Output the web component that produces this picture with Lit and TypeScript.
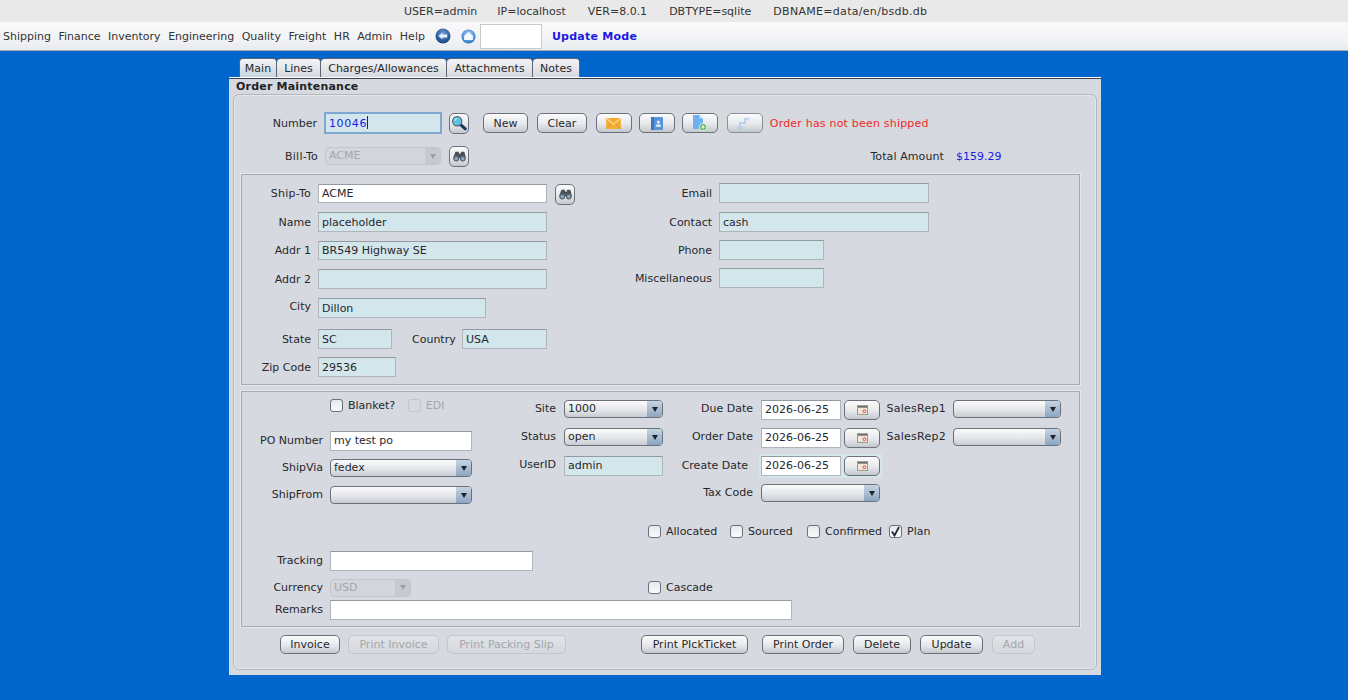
import { LitElement, html, css, svg } from "lit";
import { customElement } from "lit/decorators.js";

const icons: Record<string, unknown> = {
  back: svg`<svg width="16" height="16" viewBox="0 0 17 17"><defs><radialGradient id="bk" cx="50%" cy="35%" r="65%"><stop offset="0" stop-color="#6f9fd8"/><stop offset="1" stop-color="#123f80"/></radialGradient></defs><circle cx="8.5" cy="8.5" r="8" fill="url(#bk)"/><path d="M3.5 8.5 8 5v2h5v3H8v2z" fill="#e8f2ff"/></svg>`,
  fwd: svg`<svg width="15" height="15" viewBox="0 0 17 17"><defs><radialGradient id="fw" cx="50%" cy="40%" r="60%"><stop offset="0" stop-color="#cfe4fb"/><stop offset="1" stop-color="#1f6fc4"/></radialGradient></defs><circle cx="8.5" cy="8.5" r="8" fill="url(#fw)"/><path d="M8.500 3.500 13.500 8v4.500h-10V8z" fill="#f2f8ff"/></svg>`,
  search: svg`<svg width="16" height="16" viewBox="0 0 18 18"><path d="m10.500 10.500 5.500 5" stroke="#17385e" stroke-width="3.400" stroke-linecap="round"/><circle cx="7" cy="7" r="5.200" fill="#5fc4e4" stroke="#55606b" stroke-width="1.300"/><path d="M4 6.500a3.400 3.400 0 0 1 3-2.600" stroke="#c9eef8" stroke-width="1.200" fill="none"/></svg>`,
  binoc: svg`<svg width="15" height="13" viewBox="0 0 18 16"><path d="M4 2h4l1 3h1l1-3h4l2 8H1z" fill="#4a5058"/><circle cx="5" cy="10.500" r="3.600" fill="#5d6670"/><circle cx="13" cy="10.500" r="3.600" fill="#5d6670"/><circle cx="5" cy="10.500" r="2" fill="#86aec6"/><circle cx="13" cy="10.500" r="2" fill="#86aec6"/></svg>`,
  mail: svg`<svg width="15" height="11" viewBox="0 0 16 12"><rect width="16" height="12" rx="1" fill="#f2ab33"/><path d="m.5.5 7.500 6.500L15.500.5" stroke="#ffe2a0" stroke-width="1.200" fill="none"/><path d="m.5 11.500 5.500-6M15.500 11.500 10 5.500" stroke="#d98f1e" stroke-width=".8"/></svg>`,
  book: svg`<svg width="12" height="13" viewBox="0 0 13 14"><rect width="13" height="14" rx="1" fill="#5a93dc"/><rect width="3" height="14" fill="#3f74bd"/><circle cx="8" cy="5.500" r="1.700" fill="#e6f0fb"/><path d="M5 10.500c0-2 1.200-2.800 3-2.800s3 .8 3 2.800z" fill="#e6f0fb"/></svg>`,
  doc: svg`<svg width="15" height="16" viewBox="0 0 15 16"><path d="M1 0h6.500L11 3.500V14H1z" fill="#70b0ee"/><path d="M7.500 0v3.500H11z" fill="#cfe5fa"/><circle cx="11" cy="12" r="3.500" fill="#4aa64f" stroke="#e8f5e8"/><path d="M9 12h4M11 10v4" stroke="#fff" stroke-width="1.100"/></svg>`,
  arrows: svg`<svg width="17" height="15" viewBox="0 0 17 15" fill="none" stroke="#b9d2ea" stroke-width="2"><path d="M4 14V7h5V3h3"/><path d="m11 .5 4 2.500-4 2.500" fill="#cfe0f1" stroke="none"/><path d="M1.500 11 4 14l2.500-3"/></svg>`,
  cal: svg`<svg width="11" height="10" viewBox="0 0 14 12"><rect x=".5" y=".5" width="13" height="11" fill="#efe8da" stroke="#8a837c"/><rect x="1" y="1" width="12" height="2" fill="#6a6460"/><circle cx="9.500" cy="7.500" r="2.400" fill="#ec6a6a"/><circle cx="9.500" cy="7.500" r="1" fill="#fff"/></svg>`,
};

@customElement("app-root")
export class AppRoot extends LitElement {
  static styles = css`
    :host {
      display: block;
      height: 700px;
      overflow: hidden;
      background: #0066cc;
      font-family: "DejaVu Sans", sans-serif;
      font-size: 11px;
      color: #26282c;
    }
    .status {
      height: 22px;
      background: #e9e9e9;
      display: flex;
      align-items: center;
      padding-left: 404px;
      box-sizing: border-box;
      gap: 22px;
      color: #333;
    }
    .status .user {
      margin-right: -2px;
    }
    .status .db {
      letter-spacing: 0.3px;
    }
    .menubar {
      height: 29px;
      box-sizing: border-box;
      background: linear-gradient(#fafafb, #f2f3f5 60%, #e9ebee);
      border-bottom: 1px solid #a9acb2;
      display: flex;
      align-items: center;
      padding-left: 3px;
      color: #333;
    }
    .menus {
      display: flex;
      gap: 7.5px;
    }
    .nav {
      display: flex;
      align-items: center;
      margin-left: 10px;
      gap: 10px;
    }
    .nav svg {
      display: block;
    }
    .jump {
      width: 62px;
      height: 25px;
      box-sizing: border-box;
      background: #fff;
      border: 1px solid #c6c9cf;
      margin-left: 4px;
    }
    .mode {
      margin-left: 10px;
      font-weight: bold;
      letter-spacing: 0.25px;
      color: #1a1ae6;
    }
    .frame {
      width: 872px;
      margin: 7px 0 0 229px;
    }
    .tabs {
      display: grid;
      grid-template-columns: 38px 44px 126px 86px 47px;
      margin-left: 10px;
      height: 19px;
    }
    .tab {
      height: 19px;
      box-sizing: border-box;
      padding-top: 3px;
      text-align: center;
      border: 1px solid #5c6470;
      border-bottom: none;
      border-left-width: 0;
      border-radius: 4px 4px 0 0;
      background: linear-gradient(#f3f4f6, #d6d9df);
      white-space: nowrap;
    }
    .tab:first-child {
      border-left-width: 1px;
      background: linear-gradient(#f3f5f7, #c6d4e0);
    }
    .page {
      height: 598px;
      box-sizing: border-box;
      background: #d6d9df;
      border-top: 1px solid #fff;
      box-shadow: inset 0 1px #39414e;
      padding: 2px 4px 0;
    }
    .title {
      font-weight: bold;
      letter-spacing: 0.2px;
      padding-left: 3px;
      height: 13px;
      line-height: 13px;
      color: #222;
    }
    .card {
      margin-top: 1px;
      height: 576px;
      box-sizing: border-box;
      border: 1px solid #b3b7be;
      box-shadow: inset 0 0 0 1px #e4e6ea;
      border-radius: 6px;
      padding: 16px 17px 0 7px;
    }
    .row1 {
      display: grid;
      grid-template-columns: 83px 118px 7px 20px 14px auto 9px auto 9px auto 7px auto 7px auto 9px auto 7px 1fr;
      height: 24px;
      align-items: center;
    }
    .row2 {
      display: grid;
      grid-template-columns: 84px 116px 8px 20px 399px 76px 12px 1fr;
      height: 24px;
      margin-top: 9px;
      align-items: center;
    }
    .lbl {
      text-align: right;
      white-space: nowrap;
      padding-right: 7px;
    }
    .row2 .amount {
      padding: 0;
      letter-spacing: 0.1px;
    }
    .wide {
      letter-spacing: 0.25px;
    }
    .tf {
      height: 20px;
      box-sizing: border-box;
      border: 1px solid #b0b4bb;
      border-top-color: #949aa2;
      background: #fff;
      padding: 0 3px;
      line-height: 20px;
      white-space: nowrap;
      overflow: hidden;
      min-width: 0;
    }
    .ro {
      background: #d3e6ec;
    }
    .focus {
      height: 22px;
      line-height: 20px;
      background: #d3e6ec;
      border: 2px solid #7fa7cf;
      color: #1a1ae6;
      letter-spacing: 0.6px;
    }
    .caret {
      display: inline-block;
      width: 1px;
      height: 13px;
      background: #26282c;
      vertical-align: -2px;
    }
    .btn {
      height: 20px;
      box-sizing: border-box;
      border: 1px solid #6c7179;
      border-radius: 5px;
      background: linear-gradient(#fbfbfc, #e6e8eb 55%, #c4c8ce);
      display: flex;
      align-items: center;
      justify-content: center;
      padding: 0 9.5px;
      white-space: nowrap;
      color: #26282c;
    }
    .btn.icon {
      padding: 0;
      width: 36px;
    }
    .btn.sq {
      padding: 0;
      width: 20px;
      height: 21px;
    }
    .btn.off {
      border-color: #c3c6cc;
      background: linear-gradient(#e2e4e8, #d4d7dc);
      color: #a3a7ad;
    }
    .btn.icon.dim {
      border-color: #8b9098;
    }
    .btn.cal {
      width: 36px;
      padding: 0;
      margin-left: 3px;
    }
    .warn {
      color: #ee2a2a;
      letter-spacing: 0.2px;
    }
    .total {
      color: #1a1ae6;
    }
    .combo {
      height: 18px;
      box-sizing: border-box;
      border: 1px solid #6c7179;
      border-radius: 4px;
      background: linear-gradient(#fbfbfc, #e4e6ea 55%, #c8ccd2);
      display: flex;
      justify-content: space-between;
      align-items: stretch;
      padding-left: 3px;
      line-height: 16px;
      overflow: hidden;
    }
    .combo i {
      width: 15px;
      background: linear-gradient(#c6d4e2, #8ba6c2);
      display: flex;
      align-items: center;
      justify-content: center;
    }
    .combo i::after {
      content: "";
      border-top: 5px solid #1f2328;
      border-left: 3.5px solid transparent;
      border-right: 3.5px solid transparent;
    }
    .combo.off {
      border-color: #c3c6cc;
      background: #d3d6db;
      color: #a3a7ad;
    }
    .combo.off i {
      background: #c6cad0;
    }
    .combo.off i::after {
      border-top-color: #9a9ea5;
    }
    .box {
      box-sizing: border-box;
      border: 1px solid #a6a9af;
      box-shadow: 0 0 0 1px #e6e8eb;
      width: 839px;
    }
    .ship {
      height: 211px;
      margin-top: 6px;
      display: grid;
      grid-template-columns: 69px 7px 229px 8px 20px 137px 7px 210px;
      grid-template-rows: 28px 29px 28px 29px 31px 28px 28px;
      padding-top: 9px;
      justify-content: start;
      align-items: start;
    }
    .ship .lbl {
      padding: 0;
      line-height: 22px;
    }
    .ship .tf {
      grid-column: 3;
    }
    .ship .lbl.short {
      line-height: 20px;
    }
    .ship .tf.short {
      height: 19px;
      line-height: 18px;
    }
    .ship .lbl.city {
      line-height: 17px;
    }
    .rl {
      grid-column: 1;
    }
    .gap {
      grid-column: 3;
      display: flex;
      align-items: center;
    }
    .gap .country {
      margin: 0 auto 0 20px;
    }
    .w74 { width: 74px; }
    .w85 { width: 85px; }
    .w78 { width: 78px; }
    .w168 { width: 168px; }
    .ship .sq {
      grid-column: 5;
    }
    .ship .rlabel {
      grid-column: 6;
    }
    .ship .tf.rf {
      grid-column: 8;
    }
    .ship .lift {
      margin-top: -1px;
    }
    .ship .w105 {
      width: 105px;
    }
    .order {
      margin-top: 6px;
      height: 236px;
      padding-top: 8px;
    }
    .form {
      display: grid;
      grid-template-columns: 81px 7px 142px 84px 8px 99px 90px 8px 119px 66px 7px 108px;
      grid-template-rows: 28px 28px 28px 27px;
      align-items: start;
    }
    .form .tf {
      line-height: 18px;
    }
    .form .lbl,
    .tail .lbl {
      padding: 0;
      line-height: 18px;
    }
    .form .lbl.create {
      padding-right: 5px;
      line-height: 20px;
    }
    .form .lbl.po {
      line-height: 20px;
    }
    .c1 { grid-column: 1; }
    .c3 { grid-column: 3; }
    .c4 { grid-column: 4; }
    .c6 { grid-column: 6; }
    .c7 { grid-column: 7; }
    .c9 { grid-column: 9; }
    .c10 { grid-column: 10; }
    .c12 { grid-column: 12; }
    .r1 { grid-row: 1; }
    .r2 { grid-row: 2; }
    .r3 { grid-row: 3; }
    .r4 { grid-row: 4; }
    .po { margin-top: 3px; }
    .via { margin-top: 3px; }
    .from { margin-top: 2px; }
    .dates {
      display: flex;
    }
    .dates .tf {
      width: 80px;
    }
    .dates.hl {
      box-shadow: 0 0 0 2px #d4e6ec;
      background: #d4e6ec;
    }
    .cb {
      display: flex;
      align-items: center;
      gap: 5px;
      white-space: nowrap;
    }
    .cb b {
      width: 13px;
      height: 13px;
      box-sizing: border-box;
      border: 1px solid #6c7179;
      border-radius: 3px;
      background: linear-gradient(#e6e8ec, #fbfbfc);
      display: flex;
      align-items: center;
      justify-content: center;
    }
    .cb.off {
      color: #a3a7ad;
    }
    .cb.off b {
      border-color: #c3c6cc;
      background: #d6d9df;
    }
    .blanket {
      grid-column: 3 / 6;
      grid-row: 1;
      display: flex;
      gap: 12.5px;
      margin-top: -1px;
    }
    .flags {
      display: grid;
      grid-template-columns: 406px 82px 77px 82px auto;
      margin-top: 11px;
      height: 18px;
      align-items: center;
    }
    .tail {
      display: grid;
      grid-template-columns: 81px 7px 318px 1fr;
      margin-top: 11px;
      align-items: center;
    }
    .tail .tf {
      width: 203px;
    }
    .tail .combo {
      width: 81px;
    }
    .cur {
      margin-top: 7px;
      height: 19px;
    }
    .rem {
      margin-top: 3px;
    }
    .tail .rem-f {
      width: 462px;
      grid-column: 3 / 5;
    }
    .actions {
      margin-top: 7px;
      padding-left: 39px;
      display: flex;
      align-items: center;
      height: 21px;
    }
    .actions .btn {
      height: 19px;
      padding: 0;
      flex: none;
      margin-left: 9px;
    }
    .actions .btn:first-child {
      margin-left: 0;
      width: 60px;
    }
    .actions .a2 { width: 91px; margin-left: 8px; }
    .actions .a3 { width: 119px; margin-left: 8px; }
    .actions .a4 { width: 107px; margin-left: 75px; }
    .actions .a5 { width: 82px; margin-left: 14px; }
    .actions .a6 { width: 58px; }
    .actions .a7 { width: 63px; }
    .actions .a8 { width: 43px; }
  `;

  private lbl(text: string, cls = "") {
    return html`<div class="lbl ${cls}">${text}</div>`;
  }

  private combo(value: string, cls = "") {
    return html`<div class="combo ${cls}"><span>${value}</span><i></i></div>`;
  }

  private cb(text: string, on = false, off = false) {
    return html`<div class="cb ${off ? "off" : ""}">
      <b>${on
        ? svg`<svg width="11" height="11" viewBox="0 0 11 11"><path d="M2 5.500 4.500 9.500 9 1" fill="none" stroke="#1e2a3a" stroke-width="1.800"/></svg>`
        : ""}</b>${text}
    </div>`;
  }

  private dates() {
    return html`<div class="tf">2026-06-25</div><div class="btn cal">${icons.cal}</div>`;
  }

  render() {
    const menus = ["Shipping", "Finance", "Inventory", "Engineering", "Quality", "Freight", "HR", "Admin", "Help"];
    const tabs = ["Main", "Lines", "Charges/Allowances", "Attachments", "Notes"];
    return html`
      <div class="status">
        <span class="user">USER=admin</span><span>IP=localhost</span><span>VER=8.0.1</span><span>DBTYPE=sqlite</span><span class="db">DBNAME=data/en/bsdb.db</span>
      </div>
      <div class="menubar">
        <div class="menus">${menus.map((m) => html`<span>${m}</span>`)}</div>
        <div class="nav">${icons.back}${icons.fwd}</div>
        <div class="jump"></div>
        <div class="mode">Update Mode</div>
      </div>
      <div class="frame">
        <div class="tabs">${tabs.map((t) => html`<div class="tab">${t}</div>`)}</div>
        <div class="page">
          <div class="title">Order Maintenance</div>
          <div class="card">
            <div class="row1">
              ${this.lbl("Number")}
              <div class="tf focus">10046<span class="caret"></span></div>
              <span></span>
              <div class="btn sq">${icons.search}</div>
              <span></span>
              <div class="btn">New</div>
              <span></span>
              <div class="btn">Clear</div>
              <span></span>
              <div class="btn icon">${icons.mail}</div>
              <span></span>
              <div class="btn icon">${icons.book}</div>
              <span></span>
              <div class="btn icon">${icons.doc}</div>
              <span></span>
              <div class="btn icon dim">${icons.arrows}</div>
              <span></span>
              <div class="warn">Order has not been shipped</div>
            </div>
            <div class="row2">
              ${this.lbl("Bill-To", "wide")}
              ${this.combo("ACME", "off")}
              <span></span>
              <div class="btn sq">${icons.binoc}</div>
              <span></span>
              ${this.lbl("Total Amount", "amount")}
              <span></span>
              <div class="total">$159.29</div>
            </div>

            <div class="box ship">
              ${this.lbl("Ship-To", "rl short wide")}
              <div class="tf short">ACME</div>
              <div class="btn sq">${icons.binoc}</div>
              <div class="lbl rlabel short">Email</div>
              <div class="tf ro rf lift"></div>

              ${this.lbl("Name", "rl")}
              <div class="tf ro">placeholder</div>
              <div class="lbl rlabel">Contact</div>
              <div class="tf ro rf">cash</div>

              ${this.lbl("Addr 1", "rl short")}
              <div class="tf ro short">BR549 Highway SE</div>
              <div class="lbl rlabel short">Phone</div>
              <div class="tf ro rf w105 lift"></div>

              ${this.lbl("Addr 2", "rl")}
              <div class="tf ro"></div>
              <div class="lbl rlabel short">Miscellaneous</div>
              <div class="tf ro rf w105 lift"></div>

              ${this.lbl("City", "rl city")}
              <div class="tf ro w168">Dillon</div>

              ${this.lbl("State", "rl")}
              <div class="gap">
                <div class="tf ro w74">SC</div>
                <span class="country">Country</span>
                <div class="tf ro w85">USA</div>
              </div>

              ${this.lbl("Zip Code", "rl")}
              <div class="tf ro w78">29536</div>
            </div>

            <div class="box order">
              <div class="form">
                <div class="blanket">${this.cb("Blanket?")}${this.cb("EDI", false, true)}</div>
                <div class="lbl c4 r1">Site</div>
                <div class="c6 r1">${this.combo("1000")}</div>
                <div class="lbl c7 r1">Due Date</div>
                <div class="c9 r1 dates">${this.dates()}</div>
                <div class="lbl c10 r1 wide">SalesRep1</div>
                <div class="c12 r1">${this.combo("")}</div>

                <div class="lbl c1 r2 po">PO Number</div>
                <div class="tf c3 r2 po">my test po</div>
                <div class="lbl c4 r2">Status</div>
                <div class="c6 r2">${this.combo("open")}</div>
                <div class="lbl c7 r2">Order Date</div>
                <div class="c9 r2 dates">${this.dates()}</div>
                <div class="lbl c10 r2 wide">SalesRep2</div>
                <div class="c12 r2">${this.combo("")}</div>

                <div class="lbl c1 r3 via">ShipVia</div>
                <div class="c3 r3 via">${this.combo("fedex")}</div>
                <div class="lbl c4 r3">UserID</div>
                <div class="tf ro c6 r3">admin</div>
                <div class="lbl c7 r3 create">Create Date</div>
                <div class="c9 r3 dates hl">${this.dates()}</div>

                <div class="lbl c1 r4 from">ShipFrom</div>
                <div class="c3 r4 from">${this.combo("")}</div>
                <div class="lbl c7 r4">Tax Code</div>
                <div class="c9 r4">${this.combo("")}</div>
              </div>

              <div class="flags">
                <span></span>
                ${this.cb("Allocated")}${this.cb("Sourced")}${this.cb("Confirmed")}${this.cb("Plan", true)}
              </div>

              <div class="tail">
                <div class="lbl">Tracking</div>
                <span></span>
                <div class="tf"></div>
                <span></span>
              </div>
              <div class="tail cur">
                <div class="lbl">Currency</div>
                <span></span>
                ${this.combo("USD", "off")}
                ${this.cb("Cascade")}
              </div>
              <div class="tail rem">
                <div class="lbl">Remarks</div>
                <span></span>
                <div class="tf rem-f"></div>
              </div>
            </div>

            <div class="actions">
              <div class="btn">Invoice</div>
              <div class="btn off a2">Print Invoice</div>
              <div class="btn off a3">Print Packing Slip</div>
              <div class="btn a4">Print PIckTicket</div>
              <div class="btn a5">Print Order</div>
              <div class="btn a6">Delete</div>
              <div class="btn a7">Update</div>
              <div class="btn off a8">Add</div>
            </div>
          </div>
        </div>
      </div>
    `;
  }
}
